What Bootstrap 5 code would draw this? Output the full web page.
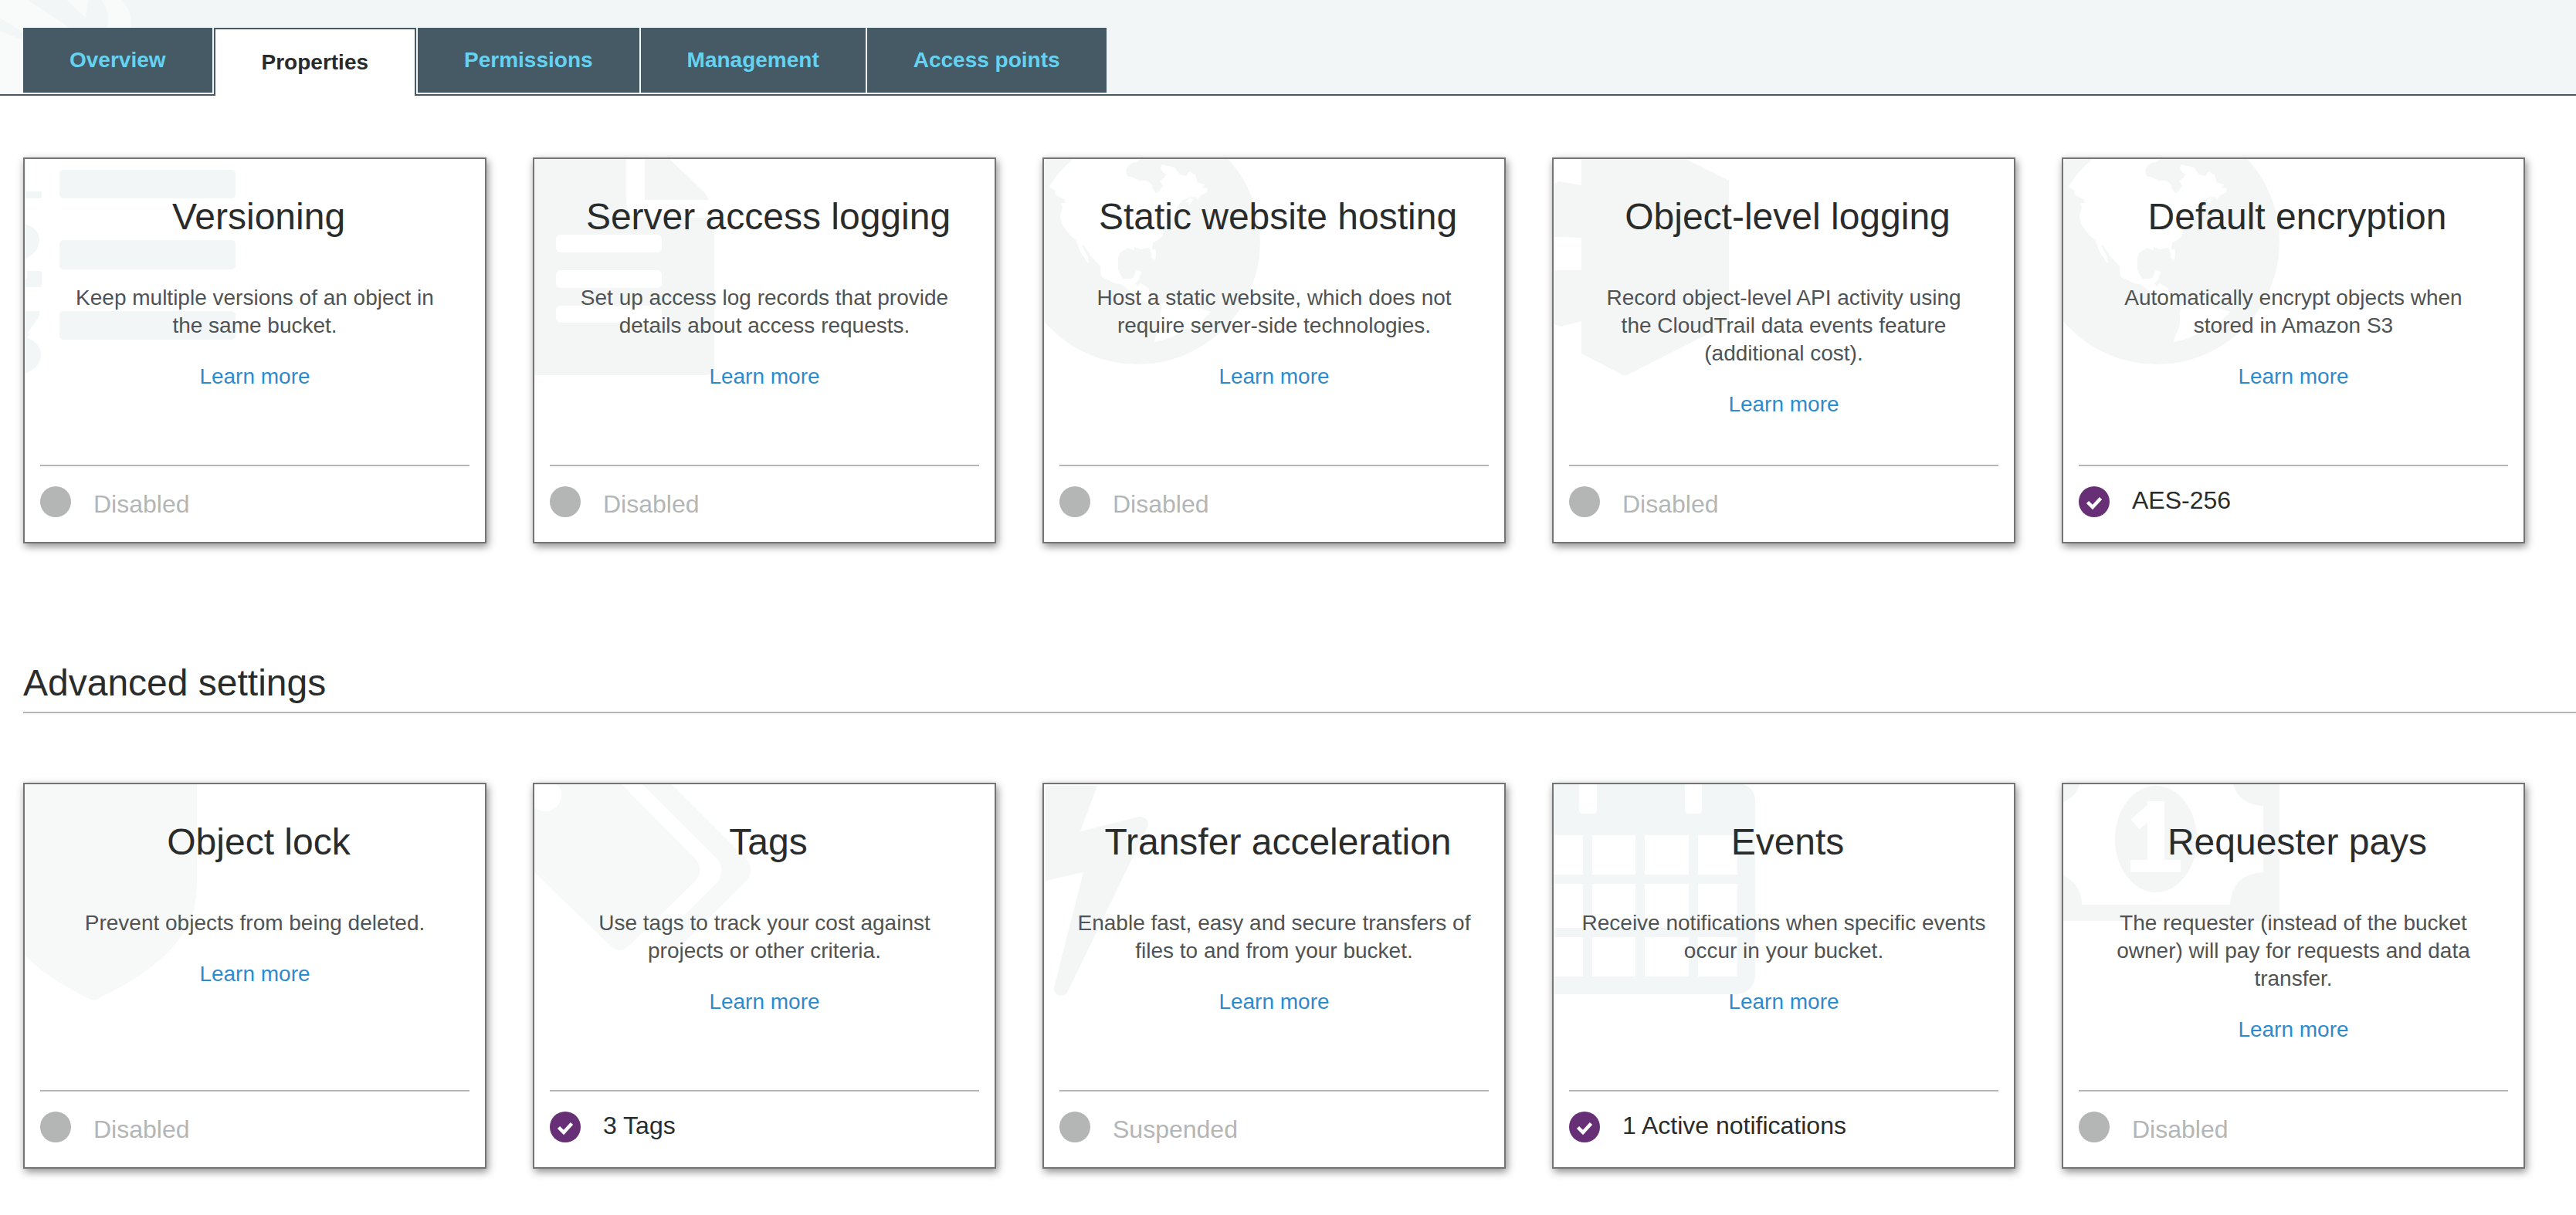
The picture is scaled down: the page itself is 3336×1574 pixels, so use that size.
<!DOCTYPE html>
<html lang="en">
<head>
<meta charset="utf-8">
<meta name="viewport" content="width=device-width, initial-scale=1">
<title>Bucket properties</title>
<link href="https://cdn.jsdelivr.net/npm/bootstrap@5.3.0/dist/css/bootstrap.min.css" rel="stylesheet">
<script src="https://cdn.jsdelivr.net/npm/bootstrap@5.3.0/dist/js/bootstrap.bundle.min.js" defer></script>
<style>
  :root { --ink: #2a2c2c; --slate: #455a64; --line: #b4b6b6; --art-blue: #f2f6f7; }
  body { font-family: "Liberation Sans", Arial, sans-serif; font-size: 28px; line-height: 36px; color: var(--ink); background: #fff; overflow-x: hidden; }

  .tab-strip { background: var(--art-blue); border-bottom: 2px solid var(--slate); padding: 36px 30px 0; }
  .tab-strip .strip-art { top: 0; left: 0; width: 200px; height: 122px; }
  .tab-strip .nav { gap: 2px; }
  .tab-strip .nav-link { background: var(--slate); color: #65d2f1; font-weight: 700; padding: 24px 60px; margin-bottom: 2px; border-radius: 0; }
  .tab-strip .nav-link.active { background: #fff; color: var(--ink); border: 2px solid var(--slate); border-bottom: 0; padding: 25px 60px; margin-bottom: -2px; }

  .settings { padding: 80px 66px 0 30px; }
  .settings-more { padding: 90px 66px 60px 30px; }
  .settings .row, .settings-more .row { --bs-gutter-x: 60px; --bs-gutter-y: 60px; }
  .section-head { margin: 152px 0 0 30px; padding-bottom: 8px; border-bottom: 2px solid var(--line); font-size: 48px; line-height: 58px; font-weight: 400; }

  .prop { min-height: 500px; border: 2px solid #747474; border-radius: 0; box-shadow: 2px 4px 10px rgba(0,0,0,.45); }
  .prop-art { top: 0; left: 0; width: 300px; height: 300px; overflow: hidden; }
  .prop-main { padding: 46px 50px 30px; }
  .settings-more .prop-main { padding-left: 34px; padding-right: 34px; }
  .prop-title { font-size: 48px; line-height: 58px; font-weight: 400; margin: 0 -30px 58px -20px; }
  .settings-more .prop-title { margin-left: 0; margin-right: -10px; }
  .prop-text { color: #505353; margin-bottom: 30px; }
  .prop a { color: #2a8bcf; }
  .prop-foot { margin: 0 20px; min-height: 100px; border-top: 2px solid var(--line); padding: 26px 0; gap: 29px; font-size: 32px; line-height: 36px; }
  .prop-foot svg { width: 40px; height: 40px; }
  .prop-foot.off { color: var(--line); line-height: 46px; }
</style>
</head>
<body>

<svg width="0" height="0" class="position-absolute" aria-hidden="true">
  <symbol id="dot" viewBox="0 0 40 40"><circle cx="20" cy="20" r="20" fill="#b4b6b6"/></symbol>
  <symbol id="tick" viewBox="0 0 40 40"><circle cx="20" cy="20" r="20" fill="#672f76"/><path d="M11.5 20.500l6.500 6.500 10.500-11.500" fill="none" stroke="#fff" stroke-width="4.500"/></symbol>
  <symbol id="globe" viewBox="0 0 300 300">
    <circle cx="121" cy="107" r="159" fill="#f4f6f6"/>
    <path fill="#fff" d="M38 0Q18 16 7 36L14 41 15 46 27 53V57H22L24 63 21 74Q22 84 28 91L34 99 41 104 47 120 56 134 58 135 57 127 49 112H52L60 125 73 139Q73 150 75 153L92 161 100 162 112 172 121 182 130 184 140 191 144 190 142 184 135 167 125 161 121 165 118 161 123 156Q124 150 126 147 124 143 119 145L116 154Q108 156 102 155L96 144V128Q98 119 106 117L108 115 117 118V114L125 117 136 115Q139 119 139 128L144 131Q146 122 144 117H140L141 109 153 101 156 90 163 80 174 70 172 62 180 53 190 50 183 56H188L187 60 194 52 184 50 197 49 199 53 203 47 211 43 212 38 205 37 208 33 199 31 196 21 188 16 184 22 176 20 169 11 153 7Q149 12 154 17L158 20Q156 26 150 28L154 35 150 41 146 45 141 39 139 32 133 28H123Q117 24 108 22 105 18 107 12 112 4 119 4L125 0Z"/>
    <path fill="#fff" d="M152 188L151 204Q152 218 145 229L143 237Q165 233 179 223L201 215 208 206 216 198Q204 194 194 190L184 182 164 180Z"/>
  </symbol>
</svg>

<header class="tab-strip position-relative">
  <svg class="strip-art position-absolute" viewBox="0 0 200 122" aria-hidden="true">
    <path fill="#f9fbfa" d="M0 0H158Q170 14 170 30L168 37H30V122H0Z"/>
    <path fill="#f2f6f7" d="M36 0L92 37H138Q145 18 131 0H114L111 23 86 0ZM0 23L30 42V52L0 40Z"/>
  </svg>
  <nav class="nav position-relative" aria-label="Bucket sections">
    <a class="nav-link" href="#overview">Overview</a>
    <a class="nav-link active" href="#properties" aria-current="page">Properties</a>
    <a class="nav-link" href="#permissions">Permissions</a>
    <a class="nav-link" href="#management">Management</a>
    <a class="nav-link" href="#access">Access points</a>
  </nav>
</header>

<main>
  <section class="settings">
    <div class="row row-cols-1 row-cols-lg-2 row-cols-xxl-5">
      <div class="col">
        <article class="card prop h-100">
          <svg class="prop-art position-absolute" viewBox="0 0 300 300" fill="#f2f6f7" aria-hidden="true">
            <rect x="45" y="14" width="228" height="37" rx="5"/><rect x="45" y="105" width="228" height="38" rx="5"/><rect x="45" y="197" width="228" height="37" rx="5"/>
            <path d="M0 0H2V42H22V51H0ZM0 84Q19 90 19 105T0 130ZM0 156L3 155V145H22V166H0ZM0 197H19V204L3 226 7 227 2 231Q21 238 21 254T0 278Z"/>
          </svg>
          <div class="prop-main position-relative text-center">
            <h2 class="prop-title">Versioning</h2>
            <p class="prop-text">Keep multiple versions of an object in the same bucket.</p>
            <a class="text-decoration-none" href="#versioning">Learn more</a>
          </div>
          <div class="prop-foot off d-flex align-items-start mt-auto"><svg aria-hidden="true"><use href="#dot"/></svg><span>Disabled</span></div>
        </article>
      </div>
      <div class="col">
        <article class="card prop h-100">
          <svg class="prop-art position-absolute" viewBox="0 0 300 300" fill="#f4f6f6" aria-hidden="true">
            <path d="M0 0H119V56Q120 76 136 76H233V268Q233 280 222 280H0ZM143 0H175L221 44 226 53H143Z"/>
            <g fill="#fff"><rect x="28" y="98" width="137" height="23" rx="6"/><rect x="28" y="144" width="137" height="23" rx="6"/><rect x="28" y="190" width="137" height="22" rx="6"/></g>
          </svg>
          <div class="prop-main position-relative text-center">
            <h2 class="prop-title">Server access logging</h2>
            <p class="prop-text">Set up access log records that provide details about access requests.</p>
            <a class="text-decoration-none" href="#logging">Learn more</a>
          </div>
          <div class="prop-foot off d-flex align-items-start mt-auto"><svg aria-hidden="true"><use href="#dot"/></svg><span>Disabled</span></div>
        </article>
      </div>
      <div class="col">
        <article class="card prop h-100">
          <svg class="prop-art position-absolute" aria-hidden="true"><use href="#globe"/></svg>
          <div class="prop-main position-relative text-center">
            <h2 class="prop-title">Static website hosting</h2>
            <p class="prop-text">Host a static website, which does not require server-side technologies.</p>
            <a class="text-decoration-none" href="#hosting">Learn more</a>
          </div>
          <div class="prop-foot off d-flex align-items-start mt-auto"><svg aria-hidden="true"><use href="#dot"/></svg><span>Disabled</span></div>
        </article>
      </div>
      <div class="col">
        <article class="card prop h-100">
          <svg class="prop-art position-absolute" viewBox="0 0 300 300" fill="#f4f6f6" aria-hidden="true">
            <path d="M36 0H171L227 28V213L95 280H90L36 252V210L10 217 0 214V144H36V102L0 101V32L7 29 36 34Z"/>
          </svg>
          <div class="prop-main position-relative text-center">
            <h2 class="prop-title">Object-level logging</h2>
            <p class="prop-text">Record object-level API activity using the CloudTrail data events feature (additional cost).</p>
            <a class="text-decoration-none" href="#object-logging">Learn more</a>
          </div>
          <div class="prop-foot off d-flex align-items-start mt-auto"><svg aria-hidden="true"><use href="#dot"/></svg><span>Disabled</span></div>
        </article>
      </div>
      <div class="col">
        <article class="card prop h-100">
          <svg class="prop-art position-absolute" aria-hidden="true"><use href="#globe"/></svg>
          <div class="prop-main position-relative text-center">
            <h2 class="prop-title">Default encryption</h2>
            <p class="prop-text">Automatically encrypt objects when stored in Amazon S3</p>
            <a class="text-decoration-none" href="#encryption">Learn more</a>
          </div>
          <div class="prop-foot d-flex align-items-start mt-auto"><svg aria-hidden="true"><use href="#tick"/></svg><span>AES-256</span></div>
        </article>
      </div>
    </div>
  </section>

  <h1 class="section-head">Advanced settings</h1>

  <section class="settings-more">
    <div class="row row-cols-1 row-cols-lg-2 row-cols-xxl-5">
      <div class="col">
        <article class="card prop h-100">
          <svg class="prop-art position-absolute" viewBox="0 0 300 300" fill="#f7f9f9" aria-hidden="true">
            <path d="M0 0H223V128Q223 172 202 198 169 243 96 277 89 282 82 277 32 253 0 222Z"/>
          </svg>
          <div class="prop-main position-relative text-center">
            <h2 class="prop-title">Object lock</h2>
            <p class="prop-text">Prevent objects from being deleted.</p>
            <a class="text-decoration-none" href="#lock">Learn more</a>
          </div>
          <div class="prop-foot off d-flex align-items-start mt-auto"><svg aria-hidden="true"><use href="#dot"/></svg><span>Disabled</span></div>
        </article>
      </div>
      <div class="col">
        <article class="card prop h-100">
          <svg class="prop-art position-absolute" viewBox="0 0 300 300" fill="#f7f9f9" aria-hidden="true">
            <path d="M0 0H113L209 97Q220 111 209 125L123 209Q110 221 98 209L0 114ZM140 0H178L275 97Q285 111 275 125L190 209Q176 219 158 206L237 127Q247 111 237 97Z"/>
            <circle cx="14" cy="14" r="21" fill="#fff"/>
          </svg>
          <div class="prop-main position-relative text-center">
            <h2 class="prop-title">Tags</h2>
            <p class="prop-text">Use tags to track your cost against projects or other criteria.</p>
            <a class="text-decoration-none" href="#tags">Learn more</a>
          </div>
          <div class="prop-foot d-flex align-items-start mt-auto"><svg aria-hidden="true"><use href="#tick"/></svg><span>3 Tags</span></div>
        </article>
      </div>
      <div class="col">
        <article class="card prop h-100">
          <svg class="prop-art position-absolute" viewBox="0 0 300 300" fill="#f4f6f6" aria-hidden="true">
            <path d="M2 2H69L47 61 123 42Q133 42 135 50L134 55 31 268Q28 274 21 274 12 272 13 263L51 114 2 125Z"/>
          </svg>
          <div class="prop-main position-relative text-center">
            <h2 class="prop-title">Transfer acceleration</h2>
            <p class="prop-text">Enable fast, easy and secure transfers of files to and from your bucket.</p>
            <a class="text-decoration-none" href="#acceleration">Learn more</a>
          </div>
          <div class="prop-foot off d-flex align-items-start mt-auto"><svg aria-hidden="true"><use href="#dot"/></svg><span>Suspended</span></div>
        </article>
      </div>
      <div class="col">
        <article class="card prop h-100">
          <svg class="prop-art position-absolute" viewBox="0 0 300 300" fill="#f2f6f7" aria-hidden="true">
            <path d="M0 0H245Q261 5 261 22V249Q259 268 239 272H0Z"/>
            <path fill="#fff" d="M33 0H56V33Q56 38 51 38H38Q33 38 33 33ZM170 0H192V33Q192 38 187 38H175Q170 38 170 33ZM0 66H38V117H0ZM50 66H106V117H50ZM118 66H175V117H118ZM187 66H238V117H187ZM0 129H38V186H0ZM50 129H106V186H50ZM118 129H175V186H118ZM187 129H238V186H187ZM0 198H38V249H0ZM50 198H106V249H50ZM118 198H175V249H118ZM187 198H238V249H187Z"/>
          </svg>
          <div class="prop-main position-relative text-center">
            <h2 class="prop-title">Events</h2>
            <p class="prop-text">Receive notifications when specific events occur in your bucket.</p>
            <a class="text-decoration-none" href="#events">Learn more</a>
          </div>
          <div class="prop-foot d-flex align-items-start mt-auto"><svg aria-hidden="true"><use href="#tick"/></svg><span>1 Active notifications</span></div>
        </article>
      </div>
      <div class="col">
        <article class="card prop h-100">
          <svg class="prop-art position-absolute" viewBox="0 0 300 300" fill="#f4f6f6" aria-hidden="true">
            <path fill-rule="evenodd" d="M0 0H280V172Q280 177 275 177H0ZM21 0Q18 15 0 23V118Q24 130 24 156H216Q218 116 259 114V28Q227 26 220 0Z"/>
            <ellipse cx="120" cy="71" rx="53" ry="69"/>
            <g fill="none" stroke="#fff"><path d="M120 22V106" stroke-width="22"/><path d="M87 106H152" stroke-width="16"/><path d="M93 52L119 29" stroke-width="17"/></g>
          </svg>
          <div class="prop-main position-relative text-center">
            <h2 class="prop-title">Requester pays</h2>
            <p class="prop-text">The requester (instead of the bucket owner) will pay for requests and data transfer.</p>
            <a class="text-decoration-none" href="#requester">Learn more</a>
          </div>
          <div class="prop-foot off d-flex align-items-start mt-auto"><svg aria-hidden="true"><use href="#dot"/></svg><span>Disabled</span></div>
        </article>
      </div>
    </div>
  </section>
</main>
</body>
</html>
